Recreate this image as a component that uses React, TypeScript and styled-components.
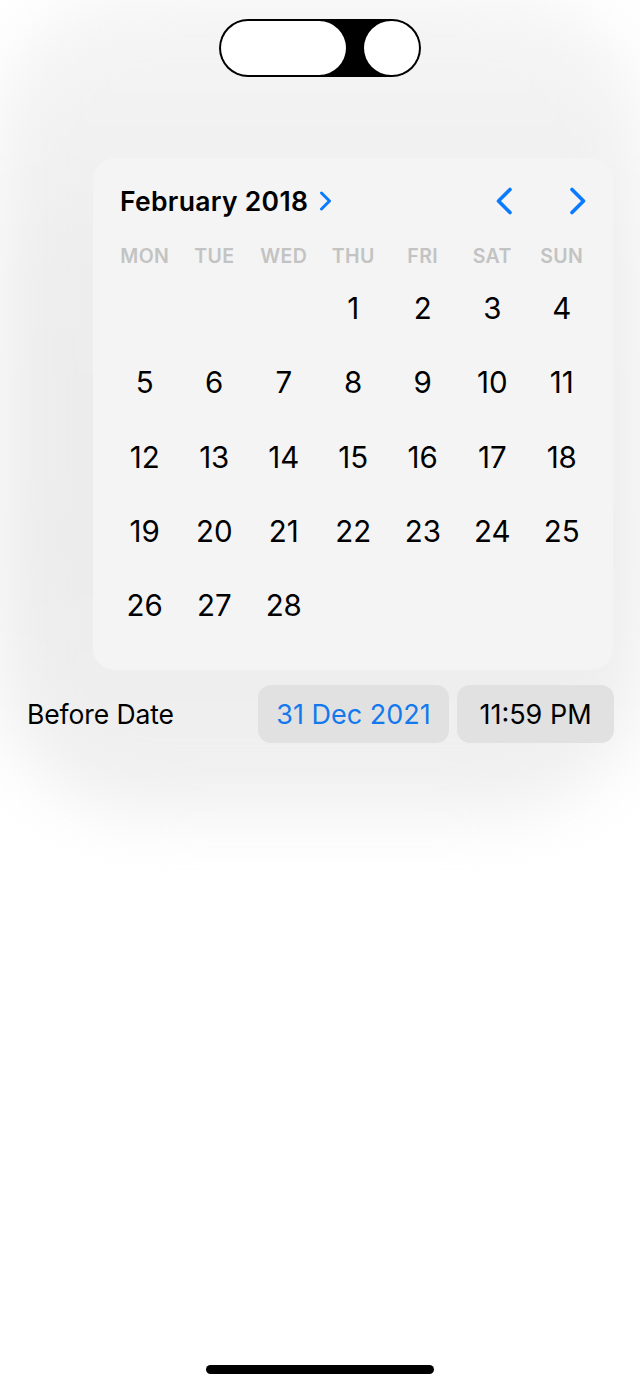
import React from "react";
import styled, { createGlobalStyle } from "styled-components";

const Global = createGlobalStyle`
  html, body { margin: 0; padding: 0; background: #ffffff; }
  body { font-family: Inter, "Noto Sans", "Liberation Sans", sans-serif; -webkit-font-smoothing: antialiased; }
  * { box-sizing: border-box; }
`;

const Screen = styled.div`
  position: relative;
  width: 640px;
  min-height: 1387px;
  display: flex;
  flex-direction: column;
  background: #ffffff;
  overflow: hidden;
`;

const Backdrop = styled.section`
  position: relative;
  display: flex;
  flex-direction: column;
  padding-top: 18px;
  &::before {
    content: "";
    position: absolute;
    top: -14px;
    left: -4px;
    right: -4px;
    height: 830px;
    border-radius: 150px;
    background: linear-gradient(180deg, #f6f6f6 0%, #ededed 35%, #ececec 70%, #f1f1f1 100%);
    filter: blur(32px);
    z-index: 0;
  }
  & > * { position: relative; z-index: 1; }
`;

const IslandWrap = styled.div`
  align-self: center;
  width: 204px;
  height: 60px;
  display: flex;
`;

const Card = styled.div`
  margin: 80px 27px 0 93px;
  width: 520px;
  height: 512px;
  border-radius: 22px;
  background: #f4f4f4;
  padding: 24px 16.5px 27.5px 17px;
  display: flex;
  flex-direction: column;
`;

const Header = styled.div`
  height: 38px;
  display: flex;
  align-items: center;
  padding: 0 5px 0 10px;
`;

const Title = styled.div`
  font-size: 26.5px;
  font-weight: 600;
  color: #000;
  letter-spacing: 0.3px;
  display: flex;
  align-items: center;
`;

const TitleChevron = styled.svg`
  margin-left: 11px;
  width: 13px;
  height: 20px;
`;

const Nav = styled.div`
  margin-left: auto;
  display: flex;
  gap: 46px;
`;

const NavButton = styled.button`
  width: 28px;
  height: 30px;
  padding: 0;
  border: 0;
  background: none;
  display: flex;
  align-items: center;
  justify-content: center;
`;

const Weekdays = styled.div`
  margin-top: 24px;
  height: 24px;
  display: grid;
  grid-template-columns: repeat(7, 1fr);
  align-items: center;
`;

const Weekday = styled.div`
  text-align: center;
  font-size: 19.5px;
  font-weight: 600;
  color: #c3c3c3;
  letter-spacing: 0.4px;
`;

const Days = styled.div`
  margin-top: 3px;
  display: grid;
  grid-template-columns: repeat(7, 1fr);
  grid-auto-rows: 74.3px;
  align-items: center;
`;

const Day = styled.div<{ $col?: number }>`
  text-align: center;
  font-size: 29.5px;
  font-weight: 400;
  color: #000;
  ${(p) => (p.$col ? `grid-column-start: ${p.$col};` : "")}
`;

const DateRow = styled.div`
  margin-top: 15px;
  height: 58px;
  display: flex;
  align-items: center;
  padding: 0 26px 0 27px;
  gap: 8px;
`;

const Label = styled.div`
  font-size: 26.5px;
  color: #000;
  margin-right: auto;
  letter-spacing: -0.1px;
`;

const Pill = styled.div<{ $w: number; $blue?: boolean }>`
  width: ${(p) => p.$w}px;
  height: 58px;
  border-radius: 13px;
  background: #e1e1e1;
  display: flex;
  align-items: center;
  justify-content: center;
  font-size: 27px;
  letter-spacing: 0px;
  color: ${(p) => (p.$blue ? "#1479ec" : "#000")};
`;

const Spacer = styled.div`
  flex: 1;
`;

const HomeIndicator = styled.div`
  align-self: center;
  width: 228px;
  height: 9px;
  border-radius: 5px;
  background: #000;
  margin-bottom: 13px;
`;

const BLUE = "#0a7aff";

const Chevron = ({ dir }: { dir: "left" | "right" }) => (
  <svg width="18" height="28" viewBox="0 0 18 28">
    <path
      d={dir === "left" ? "M15 2.5 L3.5 14 L15 25.5" : "M3 2.5 L14.5 14 L3 25.5"}
      fill="none"
      stroke={BLUE}
      strokeWidth="3.6"
      strokeLinecap="round"
      strokeLinejoin="round"
    />
  </svg>
);

const Island = () => (
  <IslandWrap>
    <svg width="204" height="60" viewBox="0 0 204 60">
      <rect x="1" y="1" width="202" height="58" rx="29" fill="#000" />
      <rect x="3" y="3" width="125" height="54" rx="27" fill="#fff" />
      <rect x="146" y="3" width="55" height="54" rx="27" fill="#fff" />
    </svg>
  </IslandWrap>
);

const weekdays = ["MON", "TUE", "WED", "THU", "FRI", "SAT", "SUN"];
const days = Array.from({ length: 28 }, (_, i) => i + 1);

export default function App() {
  return (
    <>
      <Global />
      <Screen>
        <Backdrop>
          <Island />
          <Card>
            <Header>
              <Title>
                February 2018
                <TitleChevron viewBox="0 0 13 20">
                  <path d="M2.5 2 L10.5 10 L2.5 18" fill="none" stroke={BLUE} strokeWidth="3" strokeLinecap="round" strokeLinejoin="round" />
                </TitleChevron>
              </Title>
              <Nav>
                <NavButton aria-label="Previous month">
                  <Chevron dir="left" />
                </NavButton>
                <NavButton aria-label="Next month">
                  <Chevron dir="right" />
                </NavButton>
              </Nav>
            </Header>
            <Weekdays>
              {weekdays.map((w) => (
                <Weekday key={w}>{w}</Weekday>
              ))}
            </Weekdays>
            <Days>
              {days.map((d) => (
                <Day key={d} $col={d === 1 ? 4 : undefined}>
                  {d}
                </Day>
              ))}
            </Days>
          </Card>
          <DateRow>
            <Label>Before Date</Label>
            <Pill $w={191} $blue>
              31 Dec 2021
            </Pill>
            <Pill $w={157}>11:59 PM</Pill>
          </DateRow>
        </Backdrop>
        <Spacer />
        <HomeIndicator />
      </Screen>
    </>
  );
}
